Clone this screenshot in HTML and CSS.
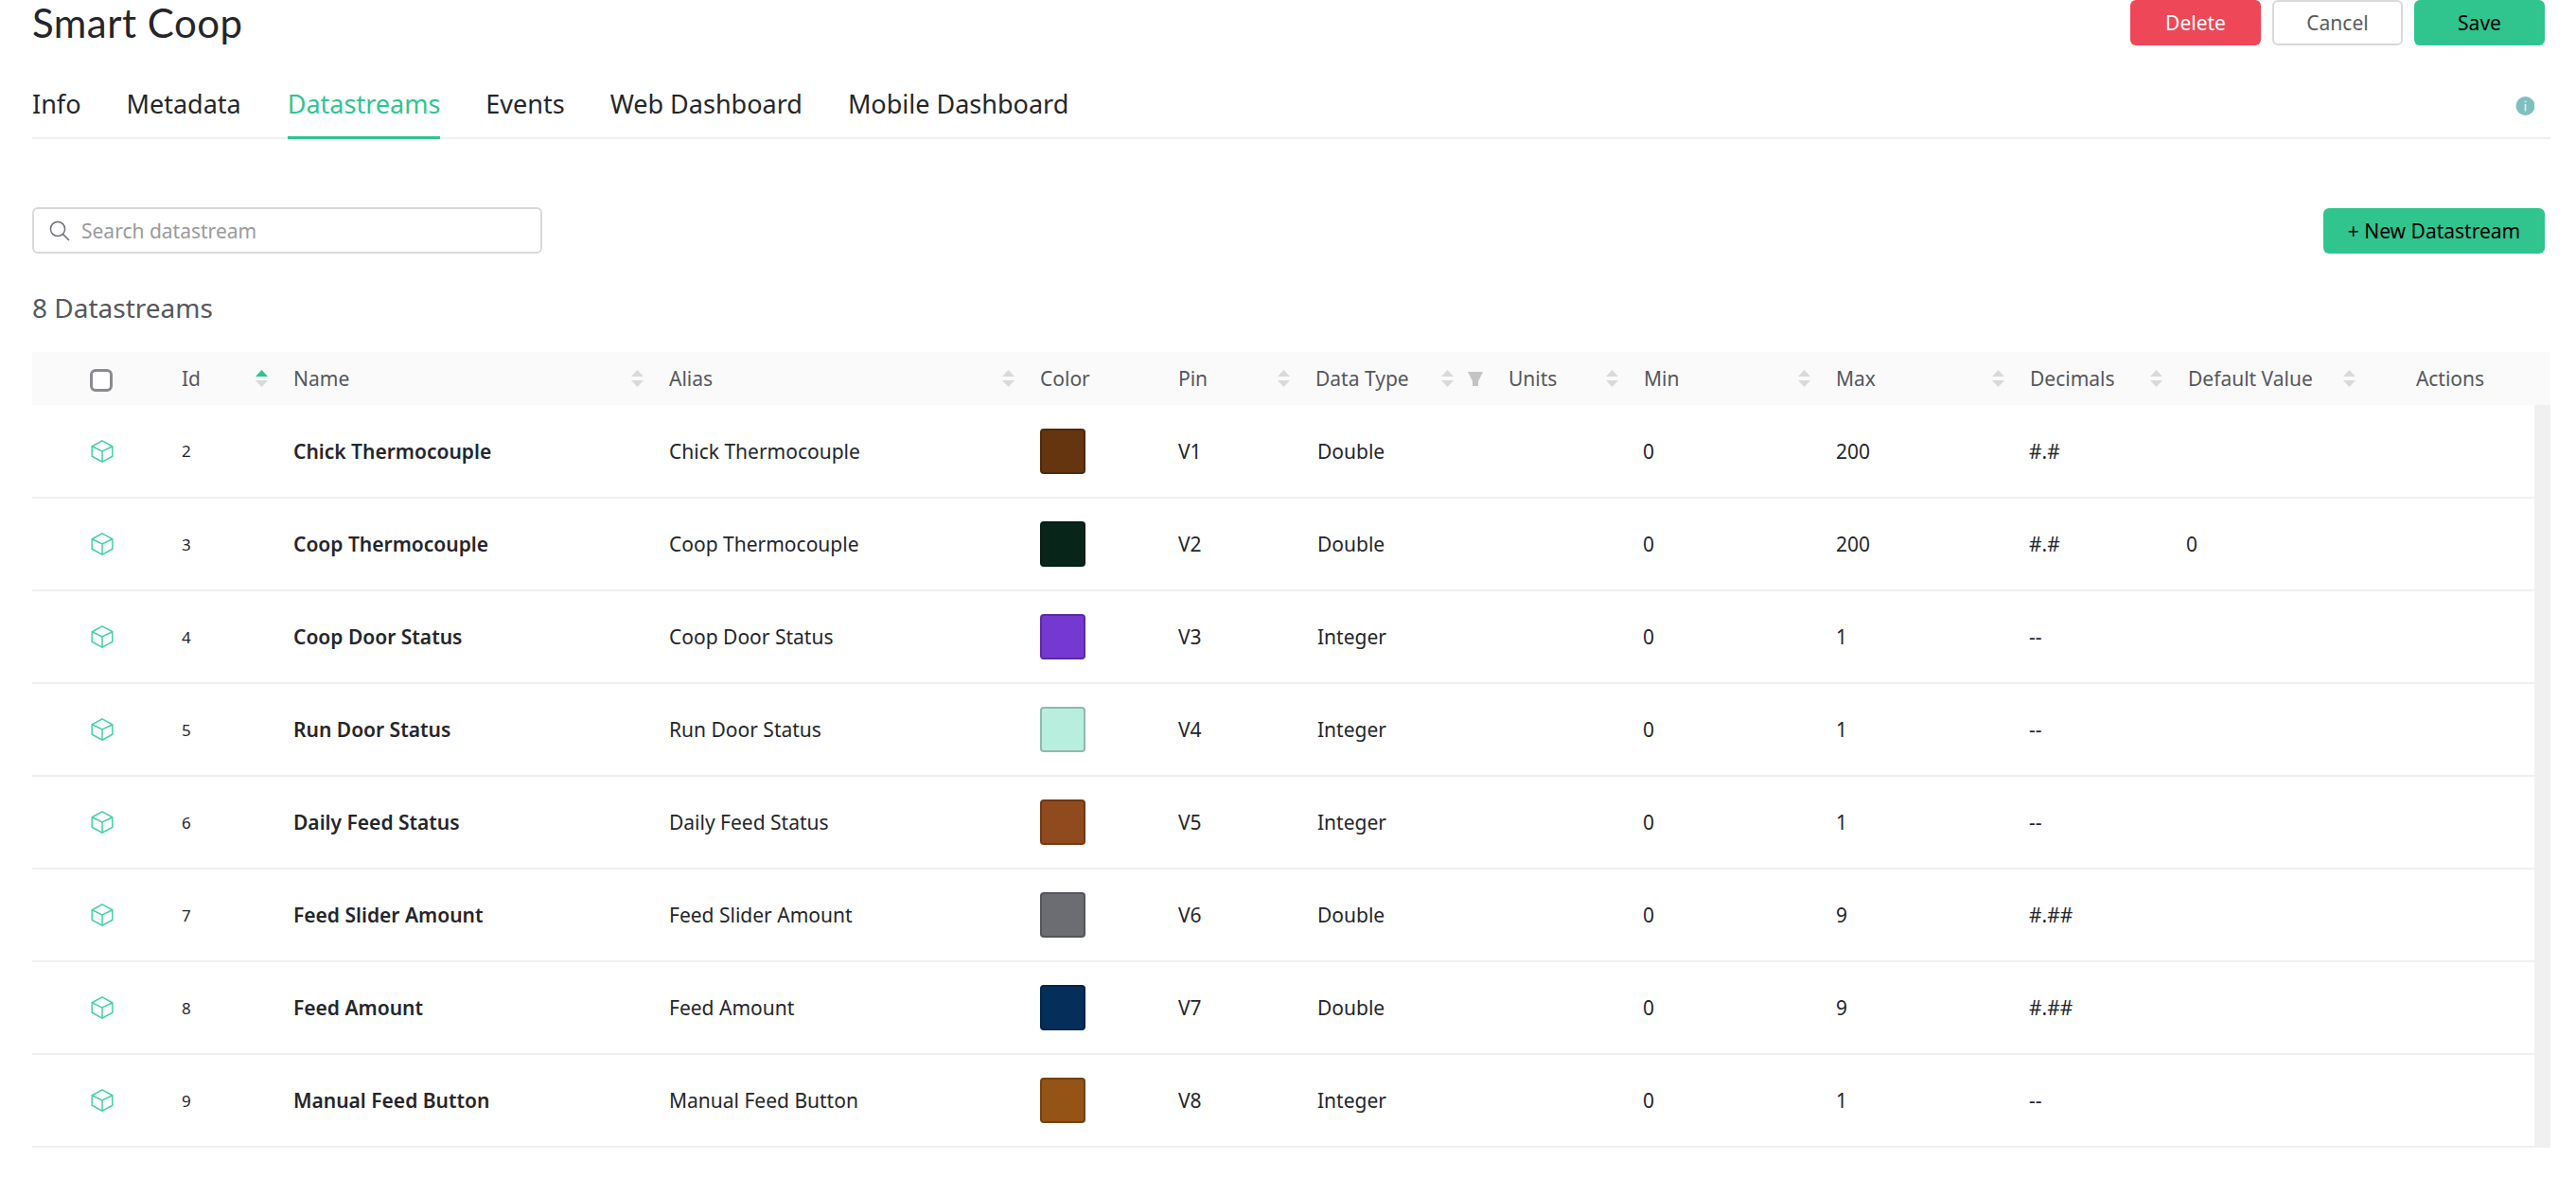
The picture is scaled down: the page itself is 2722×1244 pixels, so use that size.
FILE: index.html
```html
<!DOCTYPE html>
<html lang="en">
<head>
  <meta charset="UTF-8" />
  <title>Smart Coop</title>
  <link rel="stylesheet" href="styles.css">
</head>
<body>
  <div class="page">

    <div class="top-bar">
      <h1 class="title">Smart Coop</h1>
      <div class="top-actions">
        <button class="btn btn-danger">Delete</button>
        <button class="btn btn-plain">Cancel</button>
        <button class="btn btn-green">Save</button>
      </div>
    </div>

    <div class="tabs">
      <a class="tab">Info</a>
      <a class="tab">Metadata</a>
      <a class="tab tab-active">Datastreams</a>
      <a class="tab">Events</a>
      <a class="tab">Web Dashboard</a>
      <a class="tab">Mobile Dashboard</a>
      <svg class="info-icon" viewBox="0 0 20 20" width="20" height="20">
        <circle cx="10.5" cy="10" r="10" fill="#80bfc0"/>
        <rect x="9.6" y="4.5" width="1.8" height="1.8" fill="#d8eeee"/>
        <rect x="9.6" y="8" width="1.8" height="7.5" fill="#d8eeee"/>
      </svg>
    </div>

    <div class="toolbar">
      <label class="search">
        <svg viewBox="0 0 22 22" width="22" height="22" fill="none" stroke="#6f7178" stroke-width="1.5">
          <circle cx="9" cy="9" r="7.6"/>
          <path d="M14.6 14.6 L21 21"/>
        </svg>
        <input type="text" placeholder="Search datastream">
      </label>
      <button class="btn btn-green btn-new">+ New Datastream</button>
    </div>

    <h2 class="count">8 Datastreams</h2>

    <table class="ds-table ds-head">
      <colgroup>
        <col class="c-check"><col class="c-id"><col class="c-name"><col class="c-alias"><col class="c-color"><col class="c-pin"><col class="c-type"><col class="c-units"><col class="c-min"><col class="c-max"><col class="c-dec"><col class="c-def"><col class="c-act"><col class="c-scroll">
      </colgroup>
      <thead>
        <tr>
          <th class="cell-check"><input type="checkbox" class="check"></th>
          <th><div class="th-in">Id<span class="sort sort-asc"></span></div></th>
          <th><div class="th-in">Name<span class="sort"></span></div></th>
          <th><div class="th-in">Alias<span class="sort"></span></div></th>
          <th><div class="th-in">Color</div></th>
          <th><div class="th-in">Pin<span class="sort"></span></div></th>
          <th><div class="th-in">Data Type<span class="th-icons"><span class="sort"></span><svg viewBox="0 0 16 15" width="16" height="15"><path d="M0 0H16L11 10V15H5V10Z" fill="#c4c4c4"/></svg></span></div></th>
          <th><div class="th-in">Units<span class="sort"></span></div></th>
          <th><div class="th-in">Min<span class="sort"></span></div></th>
          <th><div class="th-in">Max<span class="sort"></span></div></th>
          <th><div class="th-in">Decimals<span class="sort"></span></div></th>
          <th><div class="th-in">Default Value<span class="sort"></span></div></th>
          <th class="cell-actions">Actions</th>
          <th></th>
        </tr>
      </thead>
    </table>

    <div class="table-body">
      <table class="ds-table">
        <colgroup>
          <col class="c-check"><col class="c-id"><col class="c-name"><col class="c-alias"><col class="c-color"><col class="c-pin"><col class="c-type"><col class="c-units"><col class="c-min"><col class="c-max"><col class="c-dec"><col class="c-def"><col class="c-act">
        </colgroup>
        <tbody>
          <tr>
            <td class="cell-check"><svg class="cube" viewBox="0 0 24 24"><path d="M12 .8L22.8 6.8V17.2L12 23.2L1.2 17.2V6.8ZM1.2 6.8L12 12L22.8 6.8M12 12V23.2"/></svg></td>
            <td class="cell-id">2</td><td class="cell-name">Chick Thermocouple</td><td>Chick Thermocouple</td>
            <td><span class="swatch" style="background:#64350f"></span></td>
            <td>V1</td><td class="cell-type">Double</td><td></td><td class="cell-min">0</td><td>200</td><td class="cell-dec">#.#</td><td class="cell-def"></td><td></td>
          </tr>
          <tr>
            <td class="cell-check"><svg class="cube" viewBox="0 0 24 24"><path d="M12 .8L22.8 6.8V17.2L12 23.2L1.2 17.2V6.8ZM1.2 6.8L12 12L22.8 6.8M12 12V23.2"/></svg></td>
            <td class="cell-id">3</td><td class="cell-name">Coop Thermocouple</td><td>Coop Thermocouple</td>
            <td><span class="swatch" style="background:#08251a"></span></td>
            <td>V2</td><td class="cell-type">Double</td><td></td><td class="cell-min">0</td><td>200</td><td class="cell-dec">#.#</td><td class="cell-def">0</td><td></td>
          </tr>
          <tr>
            <td class="cell-check"><svg class="cube" viewBox="0 0 24 24"><path d="M12 .8L22.8 6.8V17.2L12 23.2L1.2 17.2V6.8ZM1.2 6.8L12 12L22.8 6.8M12 12V23.2"/></svg></td>
            <td class="cell-id">4</td><td class="cell-name">Coop Door Status</td><td>Coop Door Status</td>
            <td><span class="swatch" style="background:#7339d0"></span></td>
            <td>V3</td><td class="cell-type">Integer</td><td></td><td class="cell-min">0</td><td>1</td><td class="cell-dec">--</td><td class="cell-def"></td><td></td>
          </tr>
          <tr>
            <td class="cell-check"><svg class="cube" viewBox="0 0 24 24"><path d="M12 .8L22.8 6.8V17.2L12 23.2L1.2 17.2V6.8ZM1.2 6.8L12 12L22.8 6.8M12 12V23.2"/></svg></td>
            <td class="cell-id">5</td><td class="cell-name">Run Door Status</td><td>Run Door Status</td>
            <td><span class="swatch" style="background:#b8eedd"></span></td>
            <td>V4</td><td class="cell-type">Integer</td><td></td><td class="cell-min">0</td><td>1</td><td class="cell-dec">--</td><td class="cell-def"></td><td></td>
          </tr>
          <tr>
            <td class="cell-check"><svg class="cube" viewBox="0 0 24 24"><path d="M12 .8L22.8 6.8V17.2L12 23.2L1.2 17.2V6.8ZM1.2 6.8L12 12L22.8 6.8M12 12V23.2"/></svg></td>
            <td class="cell-id">6</td><td class="cell-name">Daily Feed Status</td><td>Daily Feed Status</td>
            <td><span class="swatch" style="background:#8f4a1d"></span></td>
            <td>V5</td><td class="cell-type">Integer</td><td></td><td class="cell-min">0</td><td>1</td><td class="cell-dec">--</td><td class="cell-def"></td><td></td>
          </tr>
          <tr>
            <td class="cell-check"><svg class="cube" viewBox="0 0 24 24"><path d="M12 .8L22.8 6.8V17.2L12 23.2L1.2 17.2V6.8ZM1.2 6.8L12 12L22.8 6.8M12 12V23.2"/></svg></td>
            <td class="cell-id">7</td><td class="cell-name">Feed Slider Amount</td><td>Feed Slider Amount</td>
            <td><span class="swatch" style="background:#6c6d72"></span></td>
            <td>V6</td><td class="cell-type">Double</td><td></td><td class="cell-min">0</td><td>9</td><td class="cell-dec">#.##</td><td class="cell-def"></td><td></td>
          </tr>
          <tr>
            <td class="cell-check"><svg class="cube" viewBox="0 0 24 24"><path d="M12 .8L22.8 6.8V17.2L12 23.2L1.2 17.2V6.8ZM1.2 6.8L12 12L22.8 6.8M12 12V23.2"/></svg></td>
            <td class="cell-id">8</td><td class="cell-name">Feed Amount</td><td>Feed Amount</td>
            <td><span class="swatch" style="background:#042f5b"></span></td>
            <td>V7</td><td class="cell-type">Double</td><td></td><td class="cell-min">0</td><td>9</td><td class="cell-dec">#.##</td><td class="cell-def"></td><td></td>
          </tr>
          <tr>
            <td class="cell-check"><svg class="cube" viewBox="0 0 24 24"><path d="M12 .8L22.8 6.8V17.2L12 23.2L1.2 17.2V6.8ZM1.2 6.8L12 12L22.8 6.8M12 12V23.2"/></svg></td>
            <td class="cell-id">9</td><td class="cell-name">Manual Feed Button</td><td>Manual Feed Button</td>
            <td><span class="swatch" style="background:#945416"></span></td>
            <td>V8</td><td class="cell-type">Integer</td><td></td><td class="cell-min">0</td><td>1</td><td class="cell-dec">--</td><td class="cell-def"></td><td></td>
          </tr>
        </tbody>
      </table>
      <div class="scroll-track"></div>
    </div>

  </div>
</body>
</html>
```

FILE: styles.css
```css
* {
  box-sizing: border-box;
}

body {
  margin: 0;
  background: #fff;
  color: #24262b;
  font-family: "Noto Sans", "Open Sans", sans-serif;
  font-size: 21px;
}

.page {
  display: flex;
  flex-direction: column;
  height: 100vh;
  overflow: hidden;
  padding: 0 27px 0 34px;
}

.top-bar {
  display: flex;
  justify-content: space-between;
  height: 48px;
  padding-right: 6px;
}

.title {
  margin: 0;
  font-family: Lato, sans-serif;
  font-size: 42px;
  font-weight: 400;
  letter-spacing: 0.5px;
  line-height: 48px;
}

.top-actions {
  display: flex;
  gap: 12px;
}

.btn {
  height: 48px;
  border: none;
  border-radius: 6px;
  font-family: inherit;
  font-size: 21px;
  cursor: pointer;
}

.top-actions .btn {
  width: 138px;
}

.btn-danger {
  background: #ee4757;
  color: #fff;
}

.btn-plain {
  background: #fff;
  border: 2px solid #d9d9d9;
  color: #5a5c63;
}

.btn-green {
  background: #30c48f;
  color: #000;
}

.btn-new {
  width: 234px;
}

.tabs {
  display: flex;
  align-items: flex-start;
  gap: 48px;
  height: 99px;
  padding-top: 37px;
  border-bottom: 2px solid #f0f0f0;
}

.tab {
  height: 62px;
  font-size: 27px;
  line-height: 50px;
}

.tab-active {
  margin-left: 1px;
  color: #30c48f;
  border-bottom: 3px solid #30c48f;
}

.info-icon {
  margin: 17px 17px 0 auto;
}

.toolbar {
  display: flex;
  align-items: flex-end;
  justify-content: space-between;
  margin-top: 72px;
  padding-right: 6px;
}

.search {
  display: flex;
  align-items: center;
  gap: 10px;
  width: 539px;
  height: 49px;
  padding-left: 16px;
  border: 2px solid #d9d9d9;
  border-radius: 6px;
}

.search input {
  flex: 1;
  border: none;
  outline: none;
  font-family: inherit;
  font-size: 21px;
  color: #24262b;
}

.search input::placeholder {
  color: #9a9a9e;
}

.count {
  margin: 39px 0 29px;
  font-size: 28px;
  font-weight: 400;
  line-height: 36px;
  color: #55575e;
}

.ds-table {
  table-layout: fixed;
  border-collapse: collapse;
  border-spacing: 0;
}

.ds-head {
  width: 2661px;
  flex: none;
}

.c-check { width: 142px; }
.c-id { width: 118px; }
.c-name { width: 397px; }
.c-alias { width: 392px; }
.c-color { width: 146px; }
.c-pin { width: 145px; }
.c-type { width: 204px; }
.c-units { width: 143px; }
.c-min { width: 203px; }
.c-max { width: 205px; }
.c-dec { width: 167px; }
.c-def { width: 204px; }
.c-act { width: 178px; }
.c-scroll { width: 17px; }

.ds-head th {
  height: 56px;
  padding: 0 11px 0 16px;
  background: #fafafa;
  color: #55575e;
  font-weight: 400;
  font-size: 21px;
  text-align: left;
}

.ds-head th.cell-actions {
  padding: 0;
  text-align: center;
}

.ds-head th.cell-check {
  padding: 0;
}

.th-in {
  display: flex;
  align-items: center;
  justify-content: space-between;
}

.th-icons {
  display: flex;
  align-items: center;
  gap: 15px;
}

.sort {
  display: flex;
  flex-direction: column;
  gap: 4px;
  width: 13px;
}

.sort::before,
.sort::after {
  content: "";
  display: block;
  height: 7px;
  background: #d9d9d9;
}

.sort::before {
  clip-path: polygon(50% 0, 100% 100%, 0 100%);
}

.sort::after {
  clip-path: polygon(0 0, 100% 0, 50% 100%);
}

.sort-asc::before {
  background: #30c48f;
}

.check {
  appearance: none;
  display: block;
  width: 24px;
  height: 24px;
  margin: 3px 0 0 61px;
  background: #fff;
  border: 3px solid #8a8b90;
  border-radius: 6px;
}

.table-body {
  display: flex;
  width: 2661px;
}

.table-body .ds-table {
  width: 2644px;
}

.scroll-track {
  width: 17px;
  background: #f0f0f0;
}

.table-body td {
  height: 98px;
  padding: 0 16px;
  border-bottom: 2px solid #f0f0f0;
  white-space: nowrap;
}

.table-body td.cell-check {
  padding: 0 0 0 62px;
}

.table-body td.cell-type {
  padding-left: 18px;
}

.table-body td.cell-min,
.table-body td.cell-dec {
  padding-left: 15px;
}

.table-body td.cell-def {
  padding-left: 14px;
}

.cube {
  display: block;
  width: 24px;
  height: 24px;
  fill: none;
  stroke: #43d3a0;
  stroke-width: 1.5;
}

.cell-id {
  font-size: 17px;
}

.cell-name {
  font-weight: 600;
}

.swatch {
  display: block;
  width: 48px;
  height: 48px;
  border: 2px solid rgba(0, 0, 0, 0.22);
  border-radius: 4px;
}
```
